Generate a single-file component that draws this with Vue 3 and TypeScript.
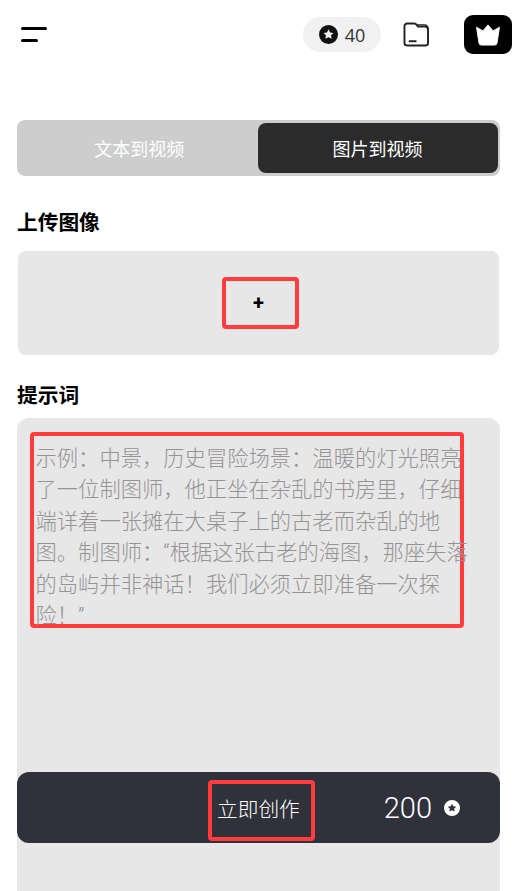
<template>
  <div class="page">
    <header class="top-bar">
      <button class="menu-btn" aria-label="menu">
        <span class="line long"></span>
        <span class="line short"></span>
      </button>
      <div class="top-right">
        <div class="credit">
          <svg class="coin" viewBox="0 0 20 20">
            <path fill-rule="evenodd" :d="coinPath" fill="#111" />
          </svg>
          <span>{{ credits }}</span>
        </div>
        <svg class="folder" viewBox="0 0 28 26" fill="none" stroke="#222" stroke-width="2">
          <path d="M4.5 1.5h7.2c1 0 1.7.4 2.3 1.200l1.500 2h7.500a3 3 0 0 1 3 3v13.800a3 3 0 0 1-3 3H4.500a3 3 0 0 1-3-3V4.500a3 3 0 0 1 3-3z" />
          <path d="M14 3h8.500a3 3 0 0 1 3 3v2" stroke-width="1.500" />
          <path d="M6 20h8" stroke-width="2" />
        </svg>
        <div class="vip">
          <svg viewBox="0 0 28 24" class="crown">
            <path d="M14 1l5.500 6.500L26.500 3.500 24 20a3 3 0 0 1-3 3H7a3 3 0 0 1-3-3L1.500 3.500 8.500 7.500z" fill="#fff" stroke="#fff" stroke-linejoin="round" />
          </svg>
        </div>
      </div>
    </header>

    <div class="tabs">
      <div v-for="(tab, index) in tabs" :key="tab" class="tab" :class="{ active: index === activeTab }">
        {{ tab }}
      </div>
    </div>

    <h2 class="title upload-title">上传图像</h2>
    <div class="upload-box">
      <div class="mark plus-mark">+</div>
    </div>

    <h2 class="title prompt-title">提示词</h2>
    <div class="prompt-box">
      <div class="mark text-mark">
        <p class="prompt-text">{{ promptText }}</p>
      </div>
    </div>

    <div class="create-bar">
      <div class="mark create-mark">立即创作</div>
      <div class="cost">
        <span>{{ cost }}</span>
        <svg class="coin-small" viewBox="0 0 20 20">
          <path fill-rule="evenodd" :d="coinPath" fill="#fff" />
        </svg>
      </div>
    </div>
  </div>
</template>

<script setup lang="ts">
import { ref } from "vue";

const credits = ref(40);
const cost = ref(200);
const activeTab = ref(1);
const tabs = ["文本到视频", "图片到视频"];
const promptText =
  "示例：中景，历史冒险场景：温暖的灯光照亮了一位制图师，他正坐在杂乱的书房里，仔细端详着一张摊在大桌子上的古老而杂乱的地图。制图师：“根据这张古老的海图，那座失落的岛屿并非神话！我们必须立即准备一次探险！”";

// 圆形金币，中间镂空一颗星
const coinPath =
  "M10 0a10 10 0 1 0 0 20a10 10 0 0 0 0-20zM10 4.600l1.650 3.300 3.650.500-2.650 2.500.650 3.600L10 12.800l-3.300 1.700.650-3.600-2.650-2.500 3.650-.500z";
</script>

<style>
html,
body {
  margin: 0;
  background: #fff;
}
</style>

<style scoped>
.page {
  position: relative;
  width: 515px;
  height: 891px;
  overflow: hidden;
  box-sizing: border-box;
  padding: 0 15px 0 17px;
  display: flex;
  flex-direction: column;
  background: #fff;
  font-family: Roboto, "Noto Sans CJK SC", sans-serif;
  font-weight: 300;
}

.top-bar {
  height: 120px;
  flex-shrink: 0;
  display: flex;
  justify-content: space-between;
  align-items: flex-start;
  margin-right: -12px;
}

.menu-btn {
  margin: 27px 0 0 4px;
  padding: 0;
  border: 0;
  background: none;
  display: flex;
  flex-direction: column;
  gap: 9px;
}

.line {
  display: block;
  height: 3px;
  border-radius: 2px;
  background: #000;
}

.long {
  width: 26px;
}

.short {
  width: 17px;
}

.top-right {
  display: flex;
  align-items: center;
  margin-top: 15px;
}

.credit {
  width: 78px;
  height: 35px;
  border-radius: 18px;
  background: #f1f1f1;
  display: flex;
  align-items: center;
  justify-content: center;
  gap: 7px;
  color: #333;
  font-family: "Open Sans", sans-serif;
  font-size: 18px;
  font-weight: 400;
}

.coin {
  width: 19px;
  height: 19px;
}

.folder {
  width: 27px;
  height: 25px;
  margin-left: 22px;
}

.vip {
  width: 48px;
  height: 39px;
  margin-left: 34px;
  border-radius: 9px;
  background: #000;
  display: flex;
  align-items: center;
  justify-content: center;
}

.crown {
  width: 26px;
  height: 22px;
}

.tabs {
  height: 56px;
  flex-shrink: 0;
  box-sizing: border-box;
  padding: 3px 2.500px 3px 0;
  border-radius: 8px;
  background: #cdcdcd;
  display: flex;
}

.tab {
  flex: 1;
  display: flex;
  align-items: center;
  justify-content: center;
  padding-left: 4px;
  border-radius: 8px;
  color: #fff;
  font-size: 18px;
  font-weight: 400;
}

.active {
  flex: none;
  width: 240px;
  padding-left: 0;
  background: #2b2b2b;
}

.title {
  margin: 0;
  color: #000;
  font-size: 20.700px;
  font-weight: 700;
  line-height: 28px;
}

.upload-title {
  margin-top: 33px;
}

.upload-box {
  height: 104px;
  flex-shrink: 0;
  margin: 14px 1px 0;
  border-radius: 8px;
  background: #e7e7e7;
  display: flex;
  align-items: center;
  justify-content: center;
}

.mark {
  box-sizing: border-box;
  border: 4px solid #ff3b3b;
  border-radius: 4px;
}

.plus-mark {
  width: 77px;
  height: 52px;
  margin-left: 4px;
  padding-right: 4px;
  display: flex;
  align-items: center;
  justify-content: center;
  font-size: 20px;
  font-weight: 700;
  color: #000;
}

.prompt-title {
  margin-top: 27px;
}

.prompt-box {
  flex: 1;
  margin-top: 8px;
  padding: 14px 0 0 13px;
  border-radius: 12px 12px 0 0;
  background: #e7e7e7;
}

.text-mark {
  width: 434px;
  height: 196px;
}

.prompt-text {
  width: 440px;
  margin: 0;
  padding: 7px 0 0 1.500px;
  color: #949494;
  font-size: 21.300px;
  line-height: 31.400px;
}

.create-bar {
  position: absolute;
  left: 17px;
  top: 772px;
  width: 483px;
  height: 71px;
  border-radius: 12px;
  background: #2f323a;
  color: #fff;
}

.create-mark {
  position: absolute;
  left: 191px;
  top: 8px;
  width: 107px;
  height: 61px;
  display: flex;
  align-items: center;
  padding: 0 0 6px 5px;
  font-size: 20.700px;
  font-weight: 300;
}

.cost {
  position: absolute;
  right: 40px;
  top: 0;
  height: 71px;
  display: flex;
  align-items: center;
  gap: 12px;
  font-size: 29px;
}

.coin-small {
  width: 16px;
  height: 16px;
}
</style>
